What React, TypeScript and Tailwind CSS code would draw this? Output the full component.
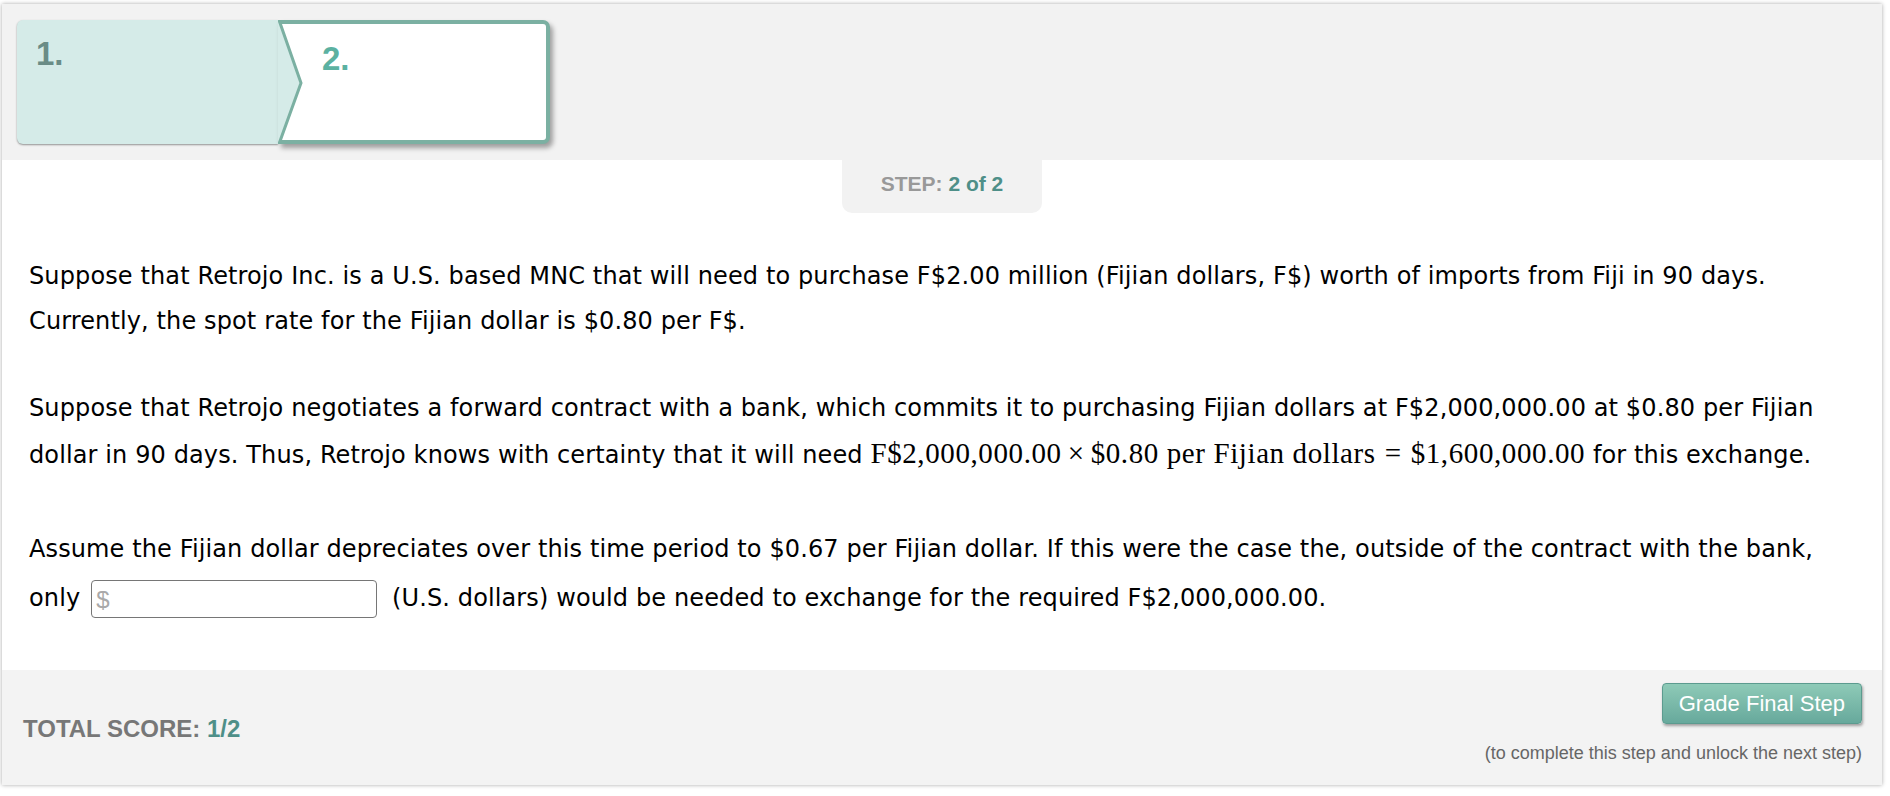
import React from 'react';

const body = { fontFamily: '"DejaVu Sans", Verdana, sans-serif' };
const arial = { fontFamily: '"Liberation Sans", Arial, sans-serif' };
const serif = { fontFamily: '"Liberation Serif", "Times New Roman", serif' };

export default function App() {
  return (
    <div className="min-h-screen bg-white pt-1 pl-[2px]">
      <div className="w-[1880px] shadow-[0_0_4px_rgba(0,0,0,0.35)]">
        {/* step tabs */}
        <div className="h-[156px] bg-[#f2f2f2] pt-4 pl-[15px] flex" style={arial}>
          <div className="w-[261px] h-[124px] bg-[#d5ebe8] rounded-l-[6px] shadow-[0_1px_2px_rgba(0,0,0,0.4)] pl-[19px] pt-[17px]">
            <span className="text-[33px] leading-none font-bold text-[#6a8c86]">1.</span>
          </div>
          <div className="relative w-[272px] h-[124px] bg-white border-4 border-l-0 border-[#7bb0a2] rounded-r-[7px] shadow-[3px_4px_5px_rgba(0,0,0,0.35)] pl-[44px] pt-[18px]">
            <svg className="absolute left-0 top-[-4px]" width="26" height="124" viewBox="0 0 26 124">
              <polygon points="0,0 23,63 0,124" fill="#d5ebe8" />
              <polyline points="1,0 23,63 1,124" fill="none" stroke="#7bb0a2" strokeWidth="3" />
            </svg>
            <span className="text-[33px] leading-none font-bold text-[#5bb1a1]">2.</span>
          </div>
        </div>

        {/* question */}
        <div className="bg-white pb-[44px]">
          <div className="flex justify-center">
            <div className="w-[200px] h-[53px] bg-[#f2f2f2] rounded-b-[10px] pt-[8px] text-center text-[21px] font-bold" style={arial}>
              <span className="text-[#999999]">STEP: </span>
              <span className="text-[#4e8f88]">2 of 2</span>
            </div>
          </div>

          <div className="px-[27px] pt-[41px] text-[24px] tracking-[0.12px] leading-[45px] text-black" style={body}>
            <p>
              Suppose that Retrojo Inc. is a U.S. based MNC that will need to purchase F$2.00 million (Fijian dollars, F$) worth of imports from Fiji in 90 days.
              <br />
              Currently, the spot rate for the Fijian dollar is $0.80 per F$.
            </p>
            <p className="mt-[42px]">
              Suppose that Retrojo negotiates a forward contract with a bank, which commits it to purchasing Fijian dollars at F$2,000,000.00 at $0.80 per Fijian
              <br />
              dollar in 90 days. Thus, Retrojo knows with certainty that it will need{' '}
              <span className="text-[29px] tracking-[0.6px]" style={serif}>
                F$2,000,000.00<span className="mx-[6px]">×</span>$0.80 per Fijian dollars<span className="mx-[9px]">=</span>$1,600,000.00
              </span>{' '}
              for this exchange.
            </p>
            <p className="mt-[49px]">
              Assume the Fijian dollar depreciates over this time period to $0.67 per Fijian dollar. If this were the case the, outside of the contract with the bank,
              <br />
              only
              <input
                type="text"
                placeholder="$"
                className="ml-[11px] mr-[7px] my-[8px] w-[286px] h-[38px] align-middle border border-[#767676] rounded-[4px] px-[4px] text-[24px] text-black placeholder:text-[#a9a9a9] outline-none"
                style={arial}
              />
              {' '}(U.S. dollars) would be needed to exchange for the required F$2,000,000.00.
            </p>
          </div>
        </div>

        {/* footer */}
        <div className="h-[115px] bg-[#f3f3f3] flex justify-between pl-[21px] pr-[20px]" style={arial}>
          <div className="self-center pt-[2px] text-[24px] font-bold">
            <span className="text-[#777777]">TOTAL SCORE: </span>
            <span className="text-[#4e8f88]">1/2</span>
          </div>
          <div className="flex flex-col items-end pt-[13px]">
            <button className="h-[41px] px-[16px] rounded-[4px] border border-[#5c9b8f] bg-gradient-to-b from-[#8ecab7] to-[#67a99c] text-white text-[22px] shadow-[1px_2px_3px_rgba(0,0,0,0.35)]">
              Grade Final Step
            </button>
            <p className="mt-[16px] text-[18px] text-[#666666]">(to complete this step and unlock the next step)</p>
          </div>
        </div>
      </div>
    </div>
  );
}
